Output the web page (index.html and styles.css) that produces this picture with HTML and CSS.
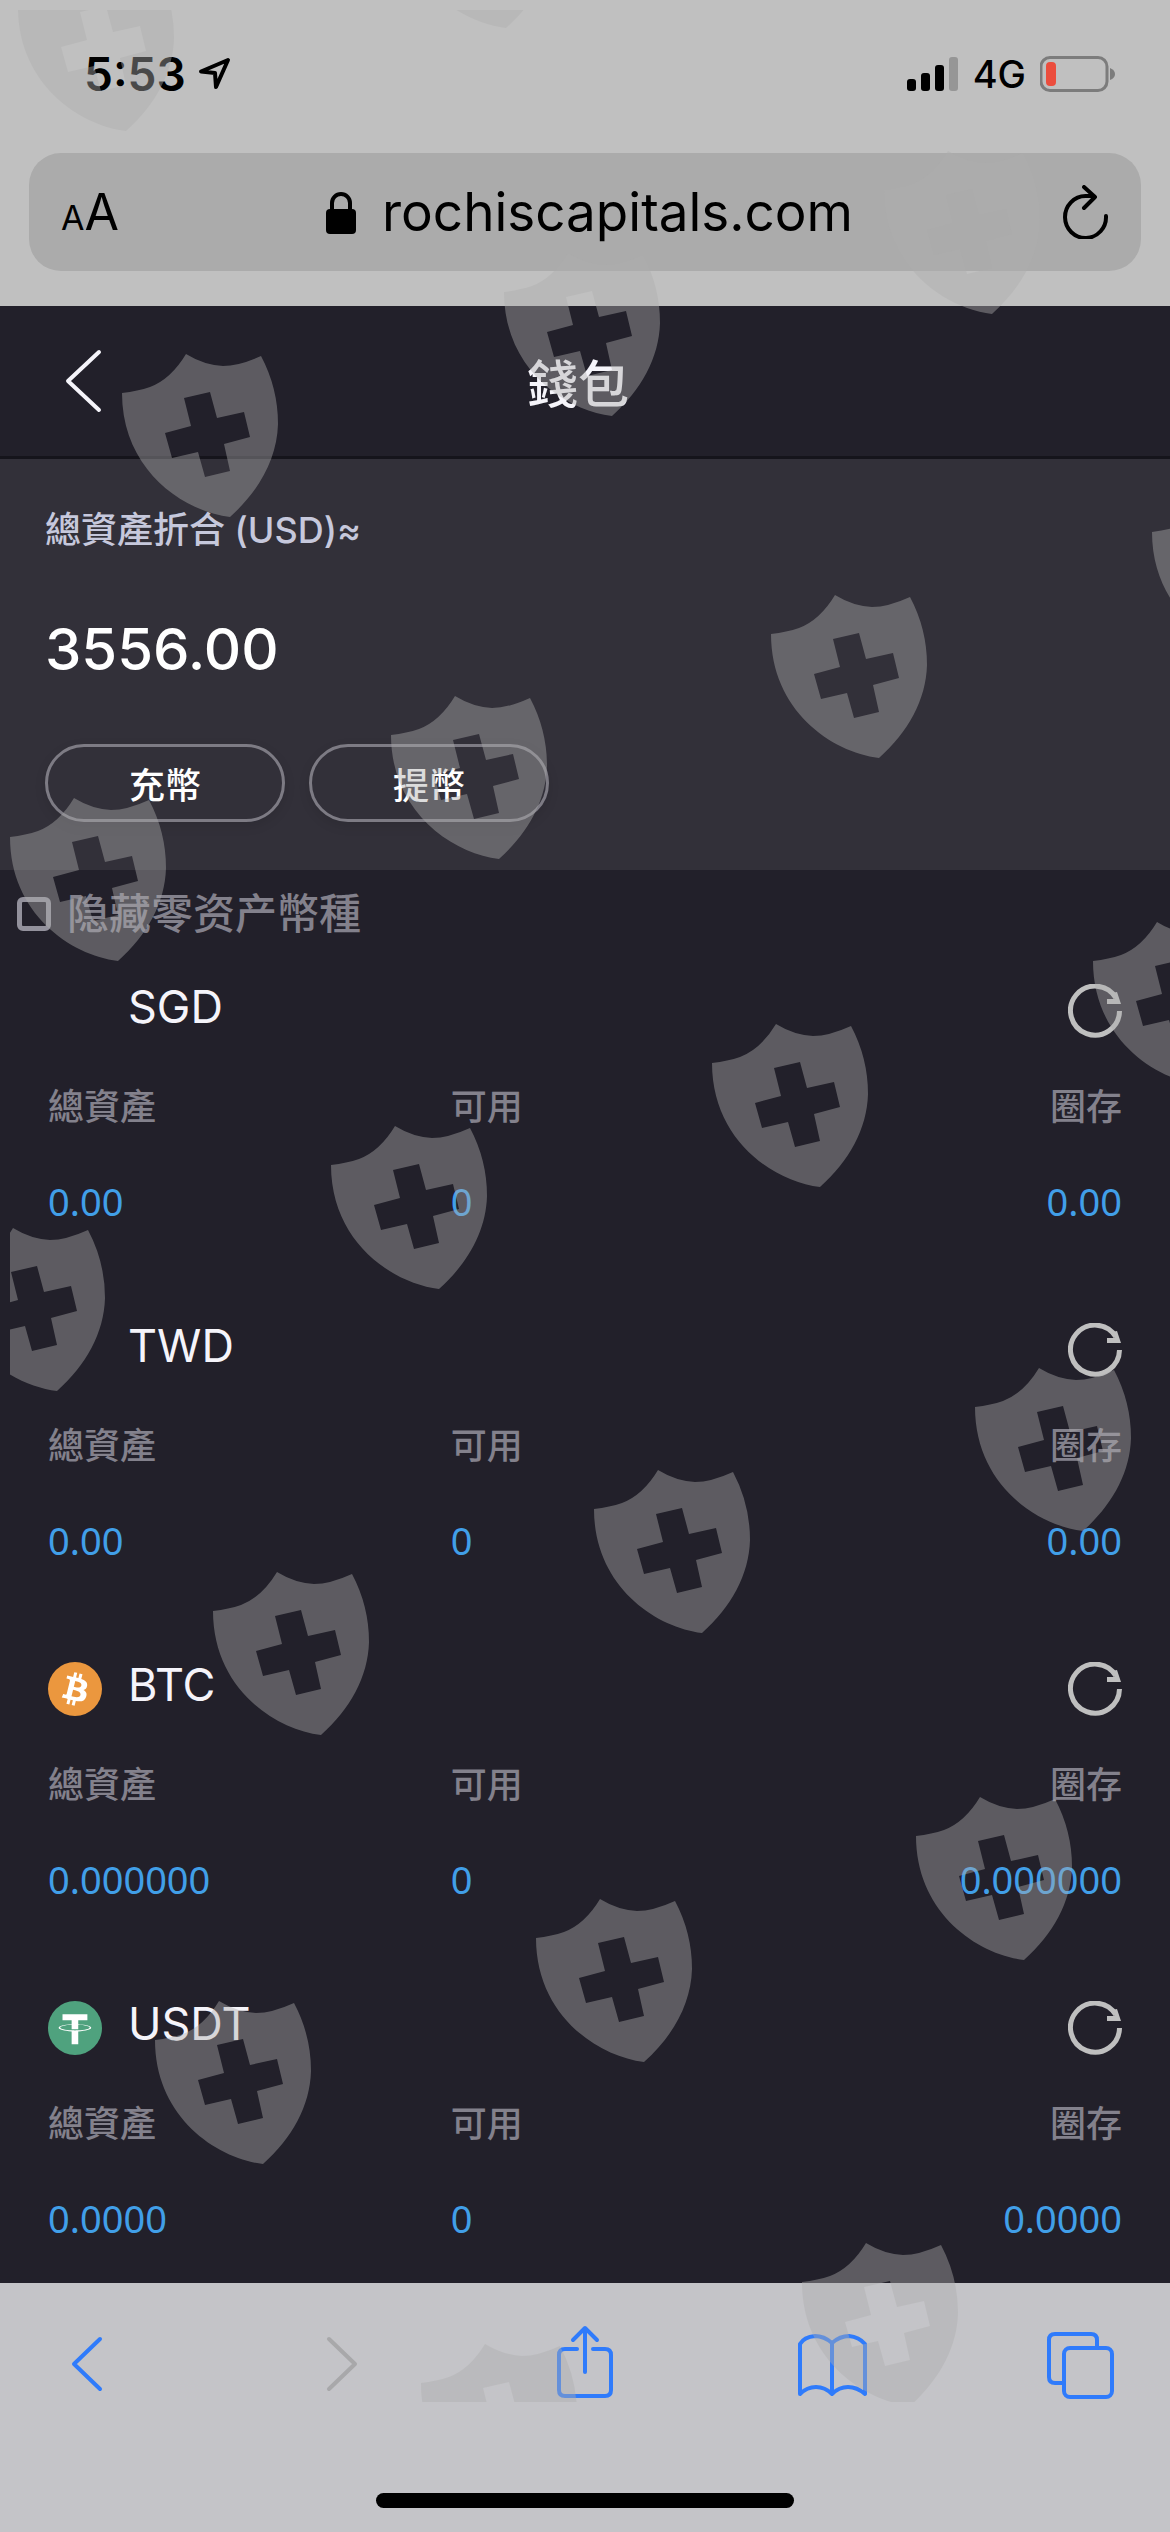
FILE: index.html
```html
<!DOCTYPE html>
<html lang="zh-Hant">
<head>
<meta charset="utf-8">
<meta name="viewport" content="width=device-width">
<title>錢包</title>
<link rel="stylesheet" href="styles.css">
</head>
<body>
<svg class="defs" aria-hidden="true">
  <symbol id="shield" viewBox="0 0 156 163">
    <path fill-rule="evenodd" d="M0 39Q16 37 28 33Q49 25 64 0Q82 11 101 12Q117 12 139 2Q156 34 156 70C155 105 137 137 108 163C60 157 0 115 0 39ZM62 44L69 72L43 79L50 104L76 98L83 123L108 117L102 90L128 83L122 58L95 64L88 38Z"/>
  </symbol>
  <symbol id="refresh" viewBox="0 0 54 54">
    <path d="M51.500 27A24.500 24.500 0 1 1 48 14" fill="none" stroke="currentColor" stroke-width="5"/>
    <path d="M39 15h8l-3-6 5-1 4 12H39z" fill="currentColor"/>
  </symbol>
</svg>

<div class="browser">
  <header class="chrome">
    <div class="status">
      <div class="status-side">
        <span class="time">5:53</span>
        <svg width="34" height="34" viewBox="0 0 34 34" aria-hidden="true"><path d="M30 3L3 14.500L17 16L18 30Z" fill="none" stroke="#000" stroke-width="4" stroke-linejoin="round"/></svg>
      </div>
      <div class="status-side">
        <svg width="52" height="34" viewBox="0 0 52 34" aria-hidden="true"><rect y="22" width="9" height="12" rx="3"/><rect x="14" y="16" width="9" height="18" rx="3"/><rect x="28" y="8" width="9" height="26" rx="3"/><rect x="42" width="9" height="34" rx="3" fill="#969696"/></svg>
        <span class="network">4G</span>
        <svg width="76" height="36" viewBox="0 0 76 36" aria-hidden="true"><rect x="1" y="1.500" width="66" height="33" rx="9" fill="none" stroke="#7c7c7c" stroke-width="3"/><rect x="6" y="6" width="10" height="24" rx="4" fill="#eb4d3d"/><path d="M70 12Q75 14 75 18T70 24Z" fill="#7c7c7c"/></svg>
      </div>
    </div>
    <div class="address">
      <button class="text-size" aria-label="文字大小"><span class="small-a">A</span><span class="large-a">A</span></button>
      <label class="url">
        <svg width="30" height="43" viewBox="0 0 30 43" aria-label="安全連線"><rect y="18" width="30" height="25" rx="4"/><path d="M6 20V12a9 9 0 0 1 18 0v8" fill="none" stroke="#000" stroke-width="4"/></svg>
        <input class="url-input" type="text" value="rochiscapitals.com" aria-label="網址" readonly>
      </label>
      <button class="reload" aria-label="重新載入"><svg width="46" height="54" viewBox="0 0 46 54"><path d="M43 31A20.500 21 0 1 1 22.500 11H31M21 2L32 12L21 23" fill="none" stroke="#000" stroke-width="4" stroke-linecap="round" stroke-linejoin="round"/></svg></button>
    </div>
  </header>

  <main class="wallet">
    <div class="title-bar">
      <button class="back" aria-label="返回"><svg width="38" height="64" viewBox="0 0 38 64"><path d="M35 3L4 32L35 61" fill="none" stroke="#f5f4fa" stroke-width="4" stroke-linecap="round" stroke-linejoin="round"/></svg></button>
      <h1 class="title">錢包</h1>
    </div>

    <section class="summary">
      <p class="summary-label">總資產折合 (USD)≈</p>
      <p class="summary-value">3556.00</p>
      <div class="actions">
        <button class="pill">充幣</button>
        <button class="pill">提幣</button>
      </div>
    </section>

    <label class="filter"><input class="filter-box" type="checkbox"><span>隐藏零资产幣種</span></label>

    <div class="coins">
      <section class="coin">
        <div class="coin-head">
          <span class="coin-icon"></span>
          <h2 class="coin-name">SGD</h2>
          <button class="refresh" aria-label="重新整理 SGD"><svg width="54" height="54"><use href="#refresh"/></svg></button>
        </div>
        <dl class="figures">
          <div class="figure"><dt>總資產</dt><dd>0.00</dd></div>
          <div class="figure"><dt>可用</dt><dd>0</dd></div>
          <div class="figure figure-end"><dt>圈存</dt><dd>0.00</dd></div>
        </dl>
      </section>
      <section class="coin">
        <div class="coin-head">
          <span class="coin-icon"></span>
          <h2 class="coin-name">TWD</h2>
          <button class="refresh" aria-label="重新整理 TWD"><svg width="54" height="54"><use href="#refresh"/></svg></button>
        </div>
        <dl class="figures">
          <div class="figure"><dt>總資產</dt><dd>0.00</dd></div>
          <div class="figure"><dt>可用</dt><dd>0</dd></div>
          <div class="figure figure-end"><dt>圈存</dt><dd>0.00</dd></div>
        </dl>
      </section>
      <section class="coin">
        <div class="coin-head">
          <svg class="coin-icon" viewBox="0 0 32 32" aria-hidden="true"><circle cx="16" cy="16" r="16" fill="#eb973e"/><path fill="#fff" d="M23.189 14.020c.314-2.096-1.283-3.223-3.465-3.975l.708-2.840-1.728-.43-.69 2.765c-.454-.114-.92-.22-1.385-.326l.695-2.783L15.596 6l-.708 2.839c-.376-.086-.746-.17-1.104-.26l.002-.009-2.384-.595-.46 1.846s1.283.294 1.256.312c.7.175.826.638.805 1.006l-.806 3.235c.048.012.11.03.18.057l-.183-.045-1.130 4.532c-.086.212-.303.531-.793.41.018.025-1.256-.313-1.256-.313l-.858 1.978 2.250.561c.418.105.828.215 1.231.318l-.715 2.872 1.727.43.708-2.840c.472.127.93.245 1.378.357l-.706 2.828 1.728.43.715-2.866c2.948.558 5.164.333 6.097-2.333.752-2.146-.037-3.385-1.588-4.192 1.130-.26 1.980-1.003 2.207-2.538zm-3.950 5.538c-.533 2.147-4.148.986-5.320.695l.95-3.805c1.172.293 4.929.872 4.370 3.110zm.535-5.569c-.487 1.953-3.495.96-4.470.717l.86-3.450c.975.243 4.118.696 3.610 2.733z"/></svg>
          <h2 class="coin-name">BTC</h2>
          <button class="refresh" aria-label="重新整理 BTC"><svg width="54" height="54"><use href="#refresh"/></svg></button>
        </div>
        <dl class="figures">
          <div class="figure"><dt>總資產</dt><dd>0.000000</dd></div>
          <div class="figure"><dt>可用</dt><dd>0</dd></div>
          <div class="figure figure-end"><dt>圈存</dt><dd>0.000000</dd></div>
        </dl>
      </section>
      <section class="coin">
        <div class="coin-head">
          <svg class="coin-icon" viewBox="0 0 32 32" aria-hidden="true"><circle cx="16" cy="16" r="16" fill="#4fa27e"/><path fill="#fff" d="M17.922 17.383v-.002c-.11.008-.677.042-1.942.042-1.010 0-1.721-.03-1.971-.042v.003c-3.888-.171-6.790-.848-6.790-1.658 0-.809 2.902-1.486 6.790-1.660v2.644c.254.018.982.061 1.988.061 1.207 0 1.812-.05 1.925-.06v-2.643c3.880.173 6.775.85 6.775 1.658 0 .81-2.895 1.485-6.775 1.657m0-3.590v-2.366h5.414V7.819H8.595v3.608h5.414v2.365c-4.400.202-7.709 1.074-7.709 2.118 0 1.044 3.309 1.915 7.709 2.118v7.582h3.913v-7.584c4.393-.202 7.694-1.073 7.694-2.116 0-1.043-3.301-1.914-7.694-2.117"/></svg>
          <h2 class="coin-name">USDT</h2>
          <button class="refresh" aria-label="重新整理 USDT"><svg width="54" height="54"><use href="#refresh"/></svg></button>
        </div>
        <dl class="figures">
          <div class="figure"><dt>總資產</dt><dd>0.0000</dd></div>
          <div class="figure"><dt>可用</dt><dd>0</dd></div>
          <div class="figure figure-end"><dt>圈存</dt><dd>0.0000</dd></div>
        </dl>
      </section>
    </div>
  </main>

  <footer class="toolbar">
    <nav class="tools">
      <button class="tool" aria-label="上一頁"><svg width="72" height="76" viewBox="0 0 72 76"><path d="M50 14L24 39L50 64"/></svg></button>
      <button class="tool tool-off" aria-label="下一頁" disabled><svg width="72" height="76" viewBox="0 0 72 76"><path d="M30 14L56 39L30 64"/></svg></button>
      <button class="tool" aria-label="分享"><svg width="72" height="76" viewBox="0 0 72 76"><path d="M30 24H18Q12 24 12 30V65Q12 71 18 71H58Q64 71 64 65V30Q64 24 58 24H46M38 47V4M26 15L38 3L50 15"/></svg></button>
      <button class="tool" aria-label="書籤"><svg width="72" height="76" viewBox="0 0 72 76"><path d="M36 18Q28 11 19 11Q8 12 4 19V69Q11 62 20 62Q29 62 36 69Q43 62 52 62Q61 62 69 69V19Q63 12 53 11Q44 11 36 18V69"/></svg></button>
      <button class="tool" aria-label="分頁"><svg width="72" height="76" viewBox="0 0 72 76"><rect x="20" y="23" width="48" height="49" rx="6"/><path d="M20 58H11Q5 58 5 52V15Q5 9 11 9H47Q53 9 53 15V23"/></svg></button>
    </nav>
    <div class="home"></div>
  </footer>

  <svg class="watermark" aria-hidden="true">
    <use href="#shield" x="8" y="-42" width="156" height="163"/>
    <use href="#shield" x="388" y="-145" width="156" height="163"/>
    <use href="#shield" x="112" y="344" width="156" height="163"/>
    <use href="#shield" x="494" y="243" width="156" height="163"/>
    <use href="#shield" x="874" y="141" width="156" height="163"/>
    <use href="#shield" x="0" y="788" width="156" height="163"/>
    <use href="#shield" x="381" y="686" width="156" height="163"/>
    <use href="#shield" x="761" y="585" width="156" height="163"/>
    <use href="#shield" x="1142" y="483" width="156" height="163"/>
    <use href="#shield" x="-61" y="1218" width="156" height="163"/>
    <use href="#shield" x="321" y="1116" width="156" height="163"/>
    <use href="#shield" x="702" y="1014" width="156" height="163"/>
    <use href="#shield" x="1083" y="912" width="156" height="163"/>
    <use href="#shield" x="203" y="1562" width="156" height="163"/>
    <use href="#shield" x="584" y="1460" width="156" height="163"/>
    <use href="#shield" x="965" y="1358" width="156" height="163"/>
    <use href="#shield" x="145" y="1991" width="156" height="163"/>
    <use href="#shield" x="526" y="1889" width="156" height="163"/>
    <use href="#shield" x="906" y="1787" width="156" height="163"/>
    <use href="#shield" x="411" y="2334" width="156" height="163"/>
    <use href="#shield" x="792" y="2233" width="156" height="163"/>
  </svg>
</div>
</body>
</html>
```
FILE: styles.css
```css
* {
  box-sizing: border-box;
}

body {
  margin: 0;
  background: #22202a;
  font-family: Inter, "Noto Sans CJK TC", sans-serif;
}

h1, h2, p, dl, dd {
  margin: 0;
  font-weight: 400;
}

button {
  padding: 0;
  border: 0;
  background: none;
  color: inherit;
  font: inherit;
}

svg {
  display: block;
}

.defs {
  position: absolute;
  width: 0;
  height: 0;
}

.browser {
  position: relative;
  display: flex;
  flex-direction: column;
  min-height: 100vh;
}

/* Browser chrome */
.chrome {
  display: flex;
  flex-direction: column;
  gap: 37px;
  padding: 32px 29px 35px;
  background: #c0c0c0;
  color: #000;
}

.status {
  display: flex;
  justify-content: space-between;
  align-items: center;
  height: 84px;
  padding: 0 25px 0 55px;
}

.status-side {
  display: flex;
  align-items: center;
  gap: 12px;
}

.time {
  font-size: 46px;
  font-weight: 600;
}

.network {
  margin: 0 2px;
  font-size: 38px;
  font-weight: 500;
}

.address {
  display: flex;
  justify-content: space-between;
  align-items: center;
  height: 118px;
  padding: 0 32px;
  border-radius: 32px;
  background: #ababab;
}

.text-size {
  display: flex;
  align-items: baseline;
  width: 64px;
}

.small-a {
  font-size: 34px;
}

.large-a {
  font-size: 50px;
}

.url {
  display: flex;
  align-items: center;
  gap: 26px;
}

.url-input {
  width: 480px;
  padding: 0;
  border: 0;
  background: none;
  color: #000;
  font: 400 53px/64px Inter, sans-serif;
}

/* Wallet page */
.wallet {
  flex: 1;
  color: #f5f4fa;
}

.title-bar {
  display: grid;
  grid-template-columns: 1fr auto 1fr;
  align-items: center;
  height: 153px;
  padding: 0 64px 0 50px;
  border-bottom: 3px solid #15141b;
}

.back {
  justify-self: start;
  padding: 0 14px;
}

.title {
  padding-top: 8px;
  font-size: 51px;
  font-weight: 500;
  line-height: 60px;
}

.summary {
  padding: 47px 45px 48px;
  background: #323039;
}

.summary-label {
  color: #c6c8dc;
  font-size: 36px;
  font-weight: 500;
  line-height: 48px;
}

.summary-value {
  margin: 60px 0;
  color: #fff;
  font-size: 58px;
  font-weight: 500;
  line-height: 70px;
}

.actions {
  display: flex;
  gap: 24px;
}

.pill {
  width: 240px;
  height: 78px;
  border: 3px solid #7d7b84;
  border-radius: 39px;
  box-shadow: 0 4px 12px #0000001a;
  color: #fff;
  font-size: 36px;
  font-weight: 500;
}

.filter {
  display: flex;
  align-items: center;
  gap: 16px;
  height: 87px;
  padding-left: 17px;
  color: #83818c;
  font-size: 42px;
  font-weight: 500;
  line-height: 60px;
}

.filter-box {
  appearance: none;
  width: 34px;
  height: 34px;
  margin: 0;
  border: 5px solid #93919c;
  border-radius: 6px;
}

.coins {
  display: flex;
  flex-direction: column;
  gap: 30px;
}

.coin {
  padding: 27px 48px 38px;
}

.coin-head {
  display: flex;
  align-items: start;
  gap: 26px;
  height: 54px;
}

.coin-icon {
  width: 54px;
  height: 54px;
}

.coin-name {
  flex: 1;
  font-size: 45px;
  line-height: 46px;
}

.refresh {
  color: #bfbfbf;
}

.figures {
  display: grid;
  grid-template-columns: 3fr 2fr 3fr;
  margin-top: 42px;
}

.figure {
  display: flex;
  flex-direction: column;
  gap: 40px;
  font-size: 36px;
  line-height: 54px;
}

.figure-end {
  text-align: right;
}

.figure dt {
  color: #83818c;
  font-weight: 500;
}

.figure dd {
  color: #419fe8;
  font-family: "Noto Sans", sans-serif;
  font-size: 38px;
}

/* Bottom toolbar */
.toolbar {
  display: flex;
  flex-direction: column;
  justify-content: space-between;
  height: 249px;
  padding: 42px 0 24px;
  background: #c4c4c8;
}

.tools {
  display: flex;
  justify-content: space-between;
  padding: 0 54px 0 50px;
}

.tool {
  color: #2f7bfb;
}

.tool-off {
  color: #a8a8aa;
}

.tool svg {
  fill: none;
  stroke: currentColor;
  stroke-width: 4;
  stroke-linecap: round;
  stroke-linejoin: round;
}

.home {
  width: 418px;
  height: 15px;
  margin: 0 auto;
  border-radius: 8px;
  background: #000;
}

/* Shield pattern laid over the whole screen */
.watermark {
  position: absolute;
  top: 10px;
  left: 10px;
  width: calc(100% - 10px);
  height: calc(100% - 140px);
  fill: #aeaeae;
  opacity: 0.42;
  pointer-events: none;
}
```
